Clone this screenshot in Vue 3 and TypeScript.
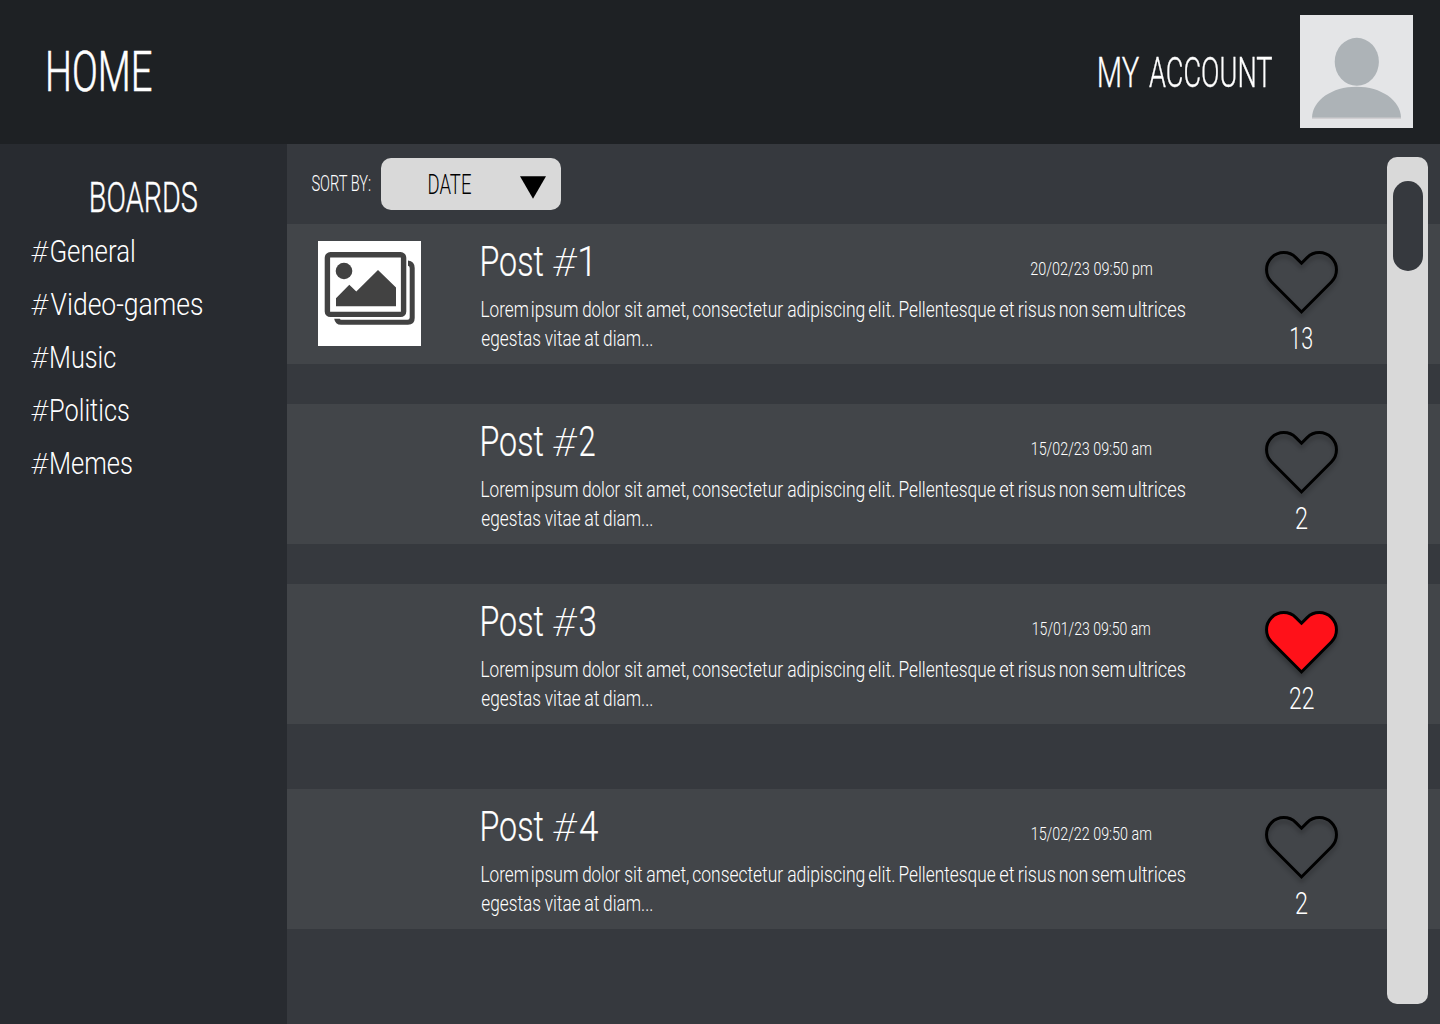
<script setup lang="ts">
interface Piece { text: string; width: number }
interface Post {
  id: number
  numberWidth: number
  date: string
  dateWidth: number
  likes: string
  likesWidth: number
  liked: boolean
  image: boolean
}

const p = (text: string, width: number): Piece => ({ text, width })

const boards: Piece[] = [
  p('General', 83), p('Video-games', 151), p('Music', 64.5), p('Politics', 77.5), p('Memes', 80.5),
]

const excerpt: Piece[][] = [
  [
    p('Lorem', 45.7), p('ipsum', 45.3), p('dolor', 37), p('sit', 17), p('amet,', 41.5),
    p('consectetur', 90), p('adipiscing', 76), p('elit.', 25), p('Pellentesque', 95),
    p('et', 14), p('risus', 36), p('non', 27), p('sem', 32), p('ultrices', 56),
  ],
  [p('egestas', 58), p('vitae', 35), p('at', 14), p('diam...', 48)],
]

const posts: Post[] = [
  { id: 1, numberWidth: 9.5, date: '20/02/23 09:50 pm', dateWidth: 121, likes: '13', likesWidth: 21, liked: false, image: true },
  { id: 2, numberWidth: 14.5, date: '15/02/23 09:50 am', dateWidth: 119, likes: '2', likesWidth: 11, liked: false, image: false },
  { id: 3, numberWidth: 15, date: '15/01/23 09:50 am', dateWidth: 117, likes: '22', likesWidth: 23.5, liked: true, image: false },
  { id: 4, numberWidth: 18, date: '15/02/22 09:50 am', dateWidth: 119, likes: '2', likesWidth: 11, liked: false, image: false },
]

// Condenses a word so that its visible glyphs span the given width.
// Glyph bounds are measured at a large size because the canvas rounds them.
const ctx = document.createElement('canvas').getContext('2d')!
const vFit = {
  mounted(el: HTMLElement, binding: { value: number }) {
    const cs = getComputedStyle(el)
    ctx.font = `${cs.fontWeight} ${parseFloat(cs.fontSize) * 10}px ${cs.fontFamily}`
    const m = ctx.measureText(el.textContent ?? '')
    const left = m.actualBoundingBoxLeft / 10
    const right = m.actualBoundingBoxRight / 10
    const scale = binding.value / (right + left)
    const natural = m.width / 10
    el.style.transform = `translateX(${left * scale}px) scaleX(${scale})`
    el.style.marginRight = `${binding.value - natural}px`
  },
}
</script>

<template>
  <div class="page">
    <header class="header">
      <a class="home"><span v-fit="103.5" class="fit">HOME</span></a>
      <div class="account">
        <span class="account-label"><span v-fit="40" class="fit">MY</span>{{ ' ' }}<span v-fit="123" class="fit">ACCOUNT</span></span>
        <svg class="avatar" viewBox="0 0 113 113">
          <rect width="113" height="113" fill="#e4e5e7" />
          <ellipse cx="56.8" cy="46.8" rx="22.1" ry="24" fill="#adb3b7" />
          <path d="M12 102.7C12.500 85 32 71.700 56.500 71.700S100.500 85 101 102.700Z" fill="#adb3b7" />
          <path d="M12 103.200H101" fill="none" stroke="#c9c5c8" stroke-width="1" />
        </svg>
      </div>
    </header>

    <div class="body">
      <aside class="sidebar">
        <h2 class="boards-title"><span v-fit="106" class="fit">BOARDS</span></h2>
        <ul class="boards">
          <li v-for="b in boards" :key="b.text">
            <span class="hash"><span v-fit="16" class="fit">#</span></span><span v-fit="b.width" class="fit">{{ b.text }}</span>
          </li>
        </ul>
      </aside>

      <main class="main">
        <div class="sort">
          <span class="sort-label"><span v-fit="58.5" class="fit">SORT BY:</span></span>
          <div class="select">
            <span v-fit="42" class="fit">DATE</span>
            <svg class="arrow" width="27" height="23" viewBox="0 0 27 23"><path d="M0 .3H26L13 22.800Z" /></svg>
          </div>
        </div>

        <div class="posts">
          <article v-for="post in posts" :key="post.id" class="post">
            <div class="thumb">
              <svg v-if="post.image" width="103" height="105" viewBox="0 0 103 105">
                <rect width="103" height="105" fill="#fff" />
                <path d="M90 19.600Q96.700 20.500 96.700 27V77Q96.700 83.700 90 83.700H23Q17.200 83.700 16.200 77.700H21.800Q22 78.800 23.500 78.800H89.500Q91.700 78.800 91.700 76.500V27Q91.700 25.300 90 24.800Z" fill="#424242" />
                <rect x="9.400" y="13.700" width="76.200" height="59.700" rx="3" fill="#fff" stroke="#424242" stroke-width="5.400" />
                <circle cx="26" cy="30" r="8.300" fill="#424242" />
                <path d="M18 57.300L31.300 43.700L38.300 50.500L60 29L78 46.500V65.300H18Z" fill="#424242" />
              </svg>
            </div>
            <div class="content">
              <div class="top">
                <h3 class="title">
                  <span v-fit="61" class="fit">Post</span><span class="hash"><span v-fit="22.5" class="fit">#</span></span><span v-fit="post.numberWidth" class="fit">{{ post.id }}</span>
                </h3>
                <time class="date"><span v-fit="post.dateWidth" class="fit">{{ post.date }}</span></time>
              </div>
              <p class="excerpt">
                <span v-for="(line, i) in excerpt" :key="i" class="line">
                  <template v-for="(w, j) in line" :key="j"><span v-fit="w.width" class="fit">{{ w.text }}</span>{{ ' ' }}</template>
                </span>
              </p>
            </div>
            <div class="likes">
              <svg class="heart" :class="{ liked: post.liked }" width="81" height="75" viewBox="0 0 81 75">
                <path d="M40.500 19.200L46.100 13.600A17.200 17.200 0 0 1 70.400 38L40.500 68L10.600 38A17.200 17.200 0 0 1 34.900 13.600Z" />
              </svg>
              <span class="count"><span v-fit="post.likesWidth" class="fit">{{ post.likes }}</span></span>
            </div>
          </article>
        </div>
        <div class="scrollbar"><div class="handle"></div></div>
      </main>
    </div>
  </div>
</template>

<style>
body {
  margin: 0;
  background: #36393e;
}
</style>

<style scoped>
.page {
  width: 1440px;
  height: 1024px;
  display: flex;
  flex-direction: column;
  overflow: hidden;
  color: #fff;
  font-family: Roboto, "Liberation Sans", sans-serif;
  font-weight: 300;
}
.fit {
  display: inline-block;
  white-space: nowrap;
  transform-origin: 0 50%;
}
.header {
  height: 144px;
  flex: none;
  box-sizing: border-box;
  padding: 0 27px 0 48px;
  display: flex;
  align-items: center;
  justify-content: space-between;
  background: #1e2124;
}
.home { font-size: 56px; line-height: 72px; -webkit-text-stroke: 0.6px currentColor; }
.account { display: flex; align-items: center; }
.account-label {
  font-size: 42px;
  line-height: 56px;
  padding-top: 1px;
  margin-right: 28.5px;
  white-space: nowrap;
  word-spacing: -0.5px;
  -webkit-text-stroke: 0.35px currentColor;
}
.avatar { width: 113px; height: 113px; margin-bottom: 1px; }
.body { flex: 1; display: flex; min-height: 0; }
.sidebar {
  width: 287px;
  flex: none;
  box-sizing: border-box;
  padding-top: 27px;
  background: #282b30;
}
.boards-title {
  margin: 0;
  padding-left: 1px;
  text-align: center;
  font-size: 42px;
  line-height: 54px;
  font-weight: 300;
  -webkit-text-stroke: 0.4px currentColor;
}
.boards {
  list-style: none;
  margin: 0;
  padding: 0 0 0 31.5px;
  font-size: 31.5px;
  line-height: 53px;
}
.boards li { display: flex; align-items: baseline; height: 53px; gap: 3px; }
.hash {
  display: inline-block;
  font-weight: 200;
  font-size: 0.94em;
  transform: skewX(-6deg);
}
.main {
  position: relative;
  flex: 1;
  background: #36393e;
}
.sort {
  height: 80px;
  display: flex;
  align-items: center;
  padding-left: 24.5px;
  gap: 11px;
}
.sort-label { font-size: 21.5px; line-height: 30px; }
.select {
  width: 180px;
  height: 52px;
  box-sizing: border-box;
  padding: 0 14px 0 48px;
  display: flex;
  align-items: center;
  justify-content: space-between;
  border-radius: 10px;
  background: #d9d9d9;
  color: #000;
  font-size: 28.5px;
}
.arrow { margin-top: 7px; }
.posts { display: flex; flex-direction: column; gap: 40px; }
.post {
  height: 140px;
  display: flex;
  background: #424549;
}
.post:last-child { margin-top: 25px; }
.thumb { width: 103px; padding: 17px 60px 0 31px; }
.thumb svg { display: block; }
.content { width: 740px; padding-top: 10px; }
.top { display: flex; height: 55px; }
.title {
  display: flex;
  align-items: baseline;
  width: 538px;
  margin: 0;
  padding-left: 1px;
  font-size: 42px;
  line-height: 55px;
  font-weight: 300;
  -webkit-text-stroke: 0.2px currentColor;
}
.title .hash { margin: 0 4px 0 10.5px; -webkit-text-stroke: 0; }
.date {
  width: 142px;
  padding-top: 7px;
  text-align: center;
  font-size: 18.3px;
  line-height: 55px;
}
.excerpt {
  margin: 6px 0 0;
  padding-left: 0.5px;
  font-size: 21.5px;
  line-height: 29px;
  word-spacing: -0.2px;
}
.line { display: block; white-space: nowrap; height: 29px; }
.likes {
  width: 81px;
  margin-left: 40px;
  padding-top: 20px;
  display: flex;
  flex-direction: column;
  align-items: center;
}
.heart { display: block; overflow: visible; filter: drop-shadow(0 4px 2px rgba(0, 0, 0, 0.25)); }
.heart path { fill: none; stroke: #000; stroke-width: 3; }
.heart.liked path { fill: #ff1119; }
.count { font-size: 31.5px; line-height: 39px; }
.scrollbar {
  position: absolute;
  top: 13px;
  right: 12px;
  width: 41px;
  height: 847px;
  box-sizing: border-box;
  padding: 24px 5px 0 6px;
  border-radius: 10px;
  background: #d9d9d9;
}
.handle { height: 90px; border-radius: 15px; background: #36393e; }
</style>
